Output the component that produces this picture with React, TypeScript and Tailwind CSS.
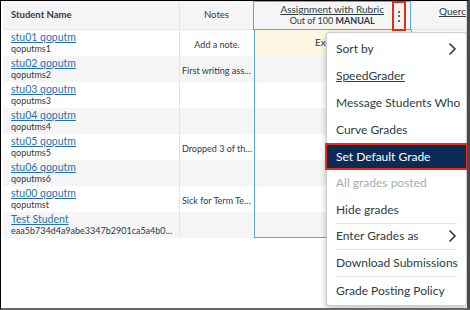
import React from 'react';

interface Student {
  name: string;
  login: string;
  note: string;
  placeholder?: boolean;
  grade?: string;
}

const students: Student[] = [
  { name: 'stu01 qoputm', login: 'qoputms1', note: 'Add a note.', placeholder: true, grade: 'Excused' },
  { name: 'stu02 qoputm', login: 'qoputms2', note: 'First writing assignment is late' },
  { name: 'stu03 qoputm', login: 'qoputms3', note: '' },
  { name: 'stu04 qoputm', login: 'qoputms4', note: '' },
  { name: 'stu05 qoputm', login: 'qoputms5', note: 'Dropped 3 of the assignments' },
  { name: 'stu06 qoputm', login: 'qoputms6', note: '' },
  { name: 'stu00 qoputm', login: 'qoputmst', note: 'Sick for Term Test 1' },
  { name: 'Test Student', login: 'eaa5b734d4a9abe3347b2901ca5a4b0e7f21', note: '' },
];

type MenuItem = { label: string; chevron?: boolean; link?: boolean; active?: boolean; disabled?: boolean; divider?: boolean };

const menu: MenuItem[] = [
  { label: 'Sort by', chevron: true },
  { label: 'SpeedGrader', link: true },
  { label: 'Message Students Who' },
  { label: 'Curve Grades' },
  { label: 'Set Default Grade', active: true },
  { label: 'All grades posted', disabled: true },
  { label: 'Hide grades', divider: true },
  { label: 'Enter Grades as', chevron: true, divider: true },
  { label: 'Download Submissions', divider: true },
  { label: 'Grade Posting Policy' },
];

function Chevron() {
  return (
    <svg width="9" height="14" viewBox="0 0 9 14" className="text-[#2d3b45] shrink-0">
      <path d="M1.5 1.5 L7 7 L1.5 12.5" fill="none" stroke="currentColor" strokeWidth="1.6" />
    </svg>
  );
}

export default function App() {
  return (
    <div className="w-[470px] h-[310px] overflow-hidden bg-white border-l border-t border-black border-r-[3px] border-b-2 border-r-[#4a4a4a] border-b-[#666] relative font-['Lato','Noto_Sans',sans-serif] text-[#2d3b45]">
      <div className="pl-[2px] w-[466px]">
        {/* header */}
        <div className="flex h-[29px] bg-[#f5f5f5] border-r border-[#d7dadd]">
          <div className="w-[177px] flex items-center pl-[8px] text-[9.5px] font-bold border-r border-b border-[#e6e6e6]">
            Student Name
          </div>
          <div className="w-[74px] flex items-center justify-center text-[9.5px] border-b border-[#e6e6e6]">
            Notes
          </div>
          <div className="w-[158px] relative border border-[#5ba8e3] flex flex-col items-center justify-center leading-[12px] pb-[1px]">
            <span className="text-[10px] underline">Assignment with Rubric</span>
            <span className="text-[9px]">
              Out of 100 <span className="font-bold">MANUAL</span>
            </span>
            <div className="absolute right-[4px] -top-[1px] w-[14px] h-[30px] border-2 border-[#ee2b10] flex flex-col items-center justify-center gap-[2.5px]">
              <span className="w-[2px] h-[2px] rounded-full bg-[#2d3b45]" />
              <span className="w-[2px] h-[2px] rounded-full bg-[#2d3b45]" />
              <span className="w-[2px] h-[2px] rounded-full bg-[#2d3b45]" />
            </div>
          </div>
          <div className="flex-1 flex items-start pt-[3px] pl-[28px] text-[10px] border-b border-[#e6e6e6]">
            <span className="underline">Querc</span>
          </div>
        </div>

        {/* rows */}
        {students.map((s, i) => (
          <div
            key={s.login}
            className={`flex h-[26px] border-r border-[#d7dadd] ${i % 2 === 1 ? 'bg-[#f5f5f5]' : 'bg-white'}`}
          >
            <div className="w-[177px] flex flex-col justify-center pl-[8px] border-r border-[#e6e6e6] leading-[11px] min-w-0">
              <span className="text-[10.5px] text-[#1f72b8] underline">{s.name}</span>
              <span className="text-[9px] truncate pr-[4px]">{s.login}</span>
            </div>
            <div
              className={`w-[74px] flex items-center text-[9px] px-[2px] pt-[3px] min-w-0 ${s.placeholder ? 'justify-center' : ''}`}
            >
              <span className="truncate">{s.note}</span>
            </div>
            <div
              className={`w-[158px] flex items-start justify-center pt-[5px] text-[10px] border-x border-[#5ba8e3] ${
                i === students.length - 1 ? 'border-b' : ''
              } ${s.grade ? 'bg-[#fdf6e3]' : ''}`}
            >
              {s.grade}
            </div>
            <div className="flex-1" />
          </div>
        ))}
      </div>

      {/* column header menu */}
      <div className="absolute left-[325px] top-[31px] w-[141px] h-[274px] bg-white border border-[#c7cdd1] rounded-[3px] shadow-[0_2px_6px_rgba(0,0,0,0.25)] pt-[3px] text-[12px]">
        {menu.map((m) => (
          <div key={m.label} className="relative h-[26.8px] px-[9px]">
            {m.active && (
              <div className="absolute -left-[2px] -right-[2px] top-0 bottom-0 bg-[#0b2b57] border-2 border-[#ee2b10]" />
            )}
            <div
              className={`relative h-full flex items-center justify-between whitespace-nowrap ${m.divider ? 'border-b border-[#e6e6e6]' : ''} ${
                m.active ? 'text-white' : m.disabled ? 'text-[#a5acb1]' : 'text-[#2d3b45]'
              }`}
            >
              <span className={m.link ? 'underline' : ''}>{m.label}</span>
              {m.chevron && <Chevron />}
            </div>
          </div>
        ))}
      </div>
    </div>
  );
}
